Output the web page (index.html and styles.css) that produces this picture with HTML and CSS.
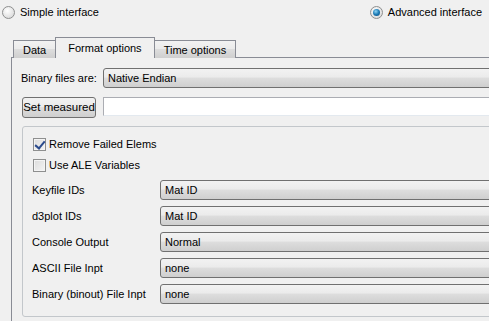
FILE: index.html
```html
<!DOCTYPE html>
<html lang="en">

<head>
    <meta charset="UTF-8">
    <title>Output options</title>
    <link rel="stylesheet" href="styles.css">
</head>

<body>
    <div class="window">
        <div class="mode-row">
            <label class="radio"><span class="radio__dot"></span>Simple interface</label>
            <label class="radio radio--on"><span class="radio__dot"></span>Advanced interface</label>
        </div>

        <div class="tabs">
            <div class="tabs__bar">
                <span class="tab">Data</span>
                <span class="tab tab--active">Format options</span>
                <span class="tab">Time options</span>
            </div>
            <div class="tabs__pane">
                <div class="row row--binary">
                    <span class="row__label">Binary files are:</span>
                    <span class="combo">Native Endian</span>
                </div>
                <div class="row row--measured">
                    <button class="btn" type="button">Set measured</button>
                    <span class="line-edit"></span>
                </div>

                <div class="group">
                    <label class="check check--on"><span class="check__box"></span>Remove Failed Elems</label>
                    <label class="check"><span class="check__box"></span>Use ALE Variables</label>

                    <div class="field"><span class="field__label">Keyfile IDs</span><span class="combo">Mat ID</span></div>
                    <div class="field"><span class="field__label">d3plot IDs</span><span class="combo">Mat ID</span></div>
                    <div class="field"><span class="field__label">Console Output</span><span class="combo">Normal</span></div>
                    <div class="field"><span class="field__label">ASCII File Inpt</span><span class="combo">none</span></div>
                    <div class="field"><span class="field__label">Binary (binout) File Inpt</span><span class="combo">none</span></div>
                </div>
            </div>
        </div>
    </div>
</body>

</html>
```

FILE: styles.css
```css
* {
    box-sizing: border-box;
    margin: 0;
    padding: 0;
}

:root {
    --bg: #f0f0f0;
    --fg: #000;
    --edge: #707070;
    --pane-edge: #898c95;
}

body {
    background: var(--bg);
    color: var(--fg);
    font: 11px/13px "Liberation Sans", Arial, sans-serif;
    overflow: hidden;
    width: 489px;
    height: 321px;
}

.window {
    width: 489px;
    height: 321px;
    overflow: hidden;
}

/* Mode radios */
.mode-row {
    display: flex;
    width: 489px;
    justify-content: space-between;
    padding: 6px 7px 0 2px;
    height: 37px;
}

.radio {
    display: flex;
    align-items: center;
    gap: 5px;
    height: 13px;
}

.radio__dot {
    width: 13px;
    height: 13px;
    border-radius: 50%;
    border: 1px solid #8e8f8f;
    background: radial-gradient(circle at 40% 35%, #ffffff 0%, #e6e6e6 55%, #d2d2d2 100%);
    position: relative;
}

.radio--on .radio__dot::after {
    content: "";
    position: absolute;
    left: 2px;
    top: 2px;
    width: 7px;
    height: 7px;
    border-radius: 50%;
    background: radial-gradient(circle at 40% 35%, #8fd5f5 0%, #1b7ab5 50%, #0d4a78 100%);
}

/* Tabs */
.tabs {
    padding-left: 11px;
    width: 600px;
}

.tabs__bar {
    display: flex;
    align-items: flex-end;
    padding-left: 2px;
    height: 20px;
}

.tab {
    height: 18px;
    margin-bottom: -1px;
    padding: 3px 9px 0;
    border: 1px solid var(--pane-edge);
    border-bottom: 0;
    background: linear-gradient(to bottom, #f2f2f2 0%, #ebebeb 45%, #dddddd 50%, #cfcfcf 100%);
}

.tab + .tab {
    margin-left: -1px;
}

.tab--active {
    position: relative;
    z-index: 1;
    height: 21px;
    padding: 4px 12px 0;
    background: var(--bg);
}

.tab--active + .tab {
    border-left: 0;
    margin-left: 0;
}

.tabs__pane {
    border: 1px solid var(--pane-edge);
    height: 300px;
    padding: 10px 0 0 9px;
}

/* Top rows */
.row {
    display: flex;
    align-items: center;
}

.row--binary {
    height: 20px;
}

.row__label {
    width: 82px;
}

.row--measured {
    margin-top: 9px;
    height: 21px;
    align-items: flex-start;
    padding-left: 1px;
}

.combo {
    display: flex;
    align-items: center;
    flex: 1;
    height: 20px;
    padding: 0 0 0 4px;
    border: 1px solid var(--edge);
    border-radius: 3px;
    background: linear-gradient(to bottom, #f2f2f2 0%, #ebebeb 45%, #dddddd 50%, #cfcfcf 100%);
}

.btn {
    width: 74px;
    height: 21px;
    border: 1px solid var(--edge);
    border-radius: 3px;
    font: 11.5px/13px "Liberation Sans", Arial, sans-serif;
    color: var(--fg);
    background: linear-gradient(to bottom, #f2f2f2 0%, #ebebeb 45%, #dddddd 50%, #cfcfcf 100%);
}

.line-edit {
    flex: 1;
    height: 19px;
    margin-left: 7px;
    background: #fff;
    border: 1px solid #abadb3;
    border-bottom-color: #e3e9ef;
}

/* Group box */
.group {
    margin: 8px 0 0 1px;
    height: 191px;
    border: 1px solid #c3c7cb;
    border-radius: 3px;
    padding: 11px 0 0 10px;
}

.check {
    display: flex;
    align-items: center;
    gap: 3px;
    height: 13px;
    margin-bottom: 8px;
}

.check__box {
    width: 13px;
    height: 13px;
    border: 1px solid #8e8f8f;
    background: linear-gradient(135deg, #dcdcdc 0%, #f4f4f4 100%);
    box-shadow: inset 0 0 0 1px #f4f4f4;
    position: relative;
}

.check--on .check__box::after {
    content: "";
    position: absolute;
    left: 3px;
    top: 0px;
    width: 4px;
    height: 8px;
    border: solid #2a4a8c;
    border-width: 0 2px 2px 0;
    transform: rotate(40deg);
}

.field {
    display: flex;
    align-items: center;
    height: 20px;
    margin-top: 6px;
    margin-left: -1px;
}

.check + .field {
    margin-top: 0;
}

.field__label {
    width: 128px;
}
```
